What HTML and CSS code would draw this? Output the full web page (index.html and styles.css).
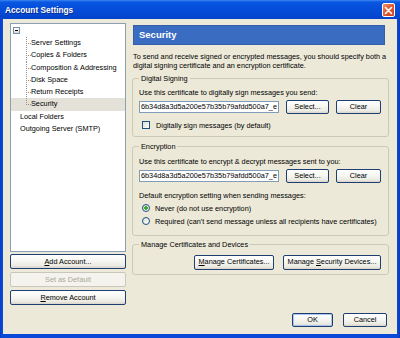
FILE: index.html
```html
<!DOCTYPE html>
<html>
<head>
<meta charset="utf-8">
<link rel="stylesheet" href="styles.css">
</head>
<body>
<div class="window">
  <div class="titlebar">
    <span class="title">Account Settings</span>
    <span class="close"><svg width="9" height="9" viewBox="0 0 9 9"><path d="M1.5 1.5 L7.5 7.5 M7.5 1.5 L1.5 7.5" stroke="#fff" stroke-width="1.6" stroke-linecap="round"/></svg></span>
  </div>
  <div class="client">
    <div class="left">
      <div class="tree">
        <div class="root"><span class="expander"></span></div>
        <div class="node child">Server Settings</div>
        <div class="node child">Copies &amp; Folders</div>
        <div class="node child">Composition &amp; Addressing</div>
        <div class="node child">Disk Space</div>
        <div class="node child">Return Receipts</div>
        <div class="node child last selected">Security</div>
        <div class="node top">Local Folders</div>
        <div class="node top">Outgoing Server (SMTP)</div>
      </div>
      <div class="acct-btns">
        <button class="btn wide"><u>A</u>dd Account...</button>
        <button class="btn wide disabled">Set as Default</button>
        <button class="btn wide"><u>R</u>emove Account</button>
      </div>
    </div>
    <div class="right">
      <div class="header">Security</div>
      <p class="desc">To send and receive signed or encrypted messages, you should specify both a digital signing certificate and an encryption certificate.</p>
      <fieldset class="group g1">
        <legend>Digital Signing</legend>
        <p class="line first">Use this certificate to digitally sign messages you send:</p>
        <div class="cert-row">
          <div class="cert">6b34d8a3d5a200e57b35b79afdd500a7_e</div>
          <button class="btn sel">Select...</button>
          <button class="btn clr">Clear</button>
        </div>
        <div class="check-row"><span class="checkbox"></span>Digitally sign messages (by default)</div>
      </fieldset>
      <fieldset class="group g2">
        <legend>Encryption</legend>
        <p class="line first">Use this certificate to encrypt &amp; decrypt messages sent to you:</p>
        <div class="cert-row">
          <div class="cert">6b34d8a3d5a200e57b35b79afdd500a7_e</div>
          <button class="btn sel">Select...</button>
          <button class="btn clr">Clear</button>
        </div>
        <p class="line default">Default encryption setting when sending messages:</p>
        <div class="radio-row"><span class="radio on"></span>Never (do not use encryption)</div>
        <div class="radio-row"><span class="radio"></span>Required (can't send message unless all recipients have certificates)</div>
      </fieldset>
      <fieldset class="group g3">
        <legend>Manage Certificates and Devices</legend>
        <div class="manage-row">
          <button class="btn mc"><u>M</u>anage Certificates...</button>
          <button class="btn msd">Manage <u>S</u>ecurity Devices...</button>
        </div>
      </fieldset>
      <div class="dlg-btns">
        <button class="btn ok">OK</button>
        <button class="btn cancel">Cancel</button>
      </div>
    </div>
  </div>
</div>
</body>
</html>
```

FILE: styles.css
```css
* { box-sizing: border-box; }
html, body { margin: 0; padding: 0; }
body {
  width: 400px;
  height: 338px;
  overflow: hidden;
  font-family: "Liberation Sans", Arial, sans-serif;
  font-size: 7.3px;
  line-height: 9px;
  color: #000;
  background: #0a3fc8;
}
.window {
  width: 400px;
  height: 338px;
  display: flex;
  flex-direction: column;
  background: linear-gradient(to right, #0a3dc4 0, #0b4ad8 2px, #0b4ad8 397px, #0a3ab8 400px);
  padding: 0 3px 4px 3px;
}
.titlebar {
  height: 19px;
  margin: 0 -3px;
  padding: 0 5px 0 5px;
  display: flex;
  align-items: center;
  justify-content: space-between;
  background: linear-gradient(#3a84ee 0, #0a58e2 2px, #0650dc 6px, #054bd6 12px, #0443cc 19px);
}
.title {
  color: #fff;
  font-weight: bold;
  font-size: 8.3px;
  text-shadow: 1px 1px 0 #0b2a8a;
  margin-top: 2px;
}
.close {
  width: 13px;
  height: 14px;
  border: 1px solid #fff;
  border-radius: 2px;
  background: linear-gradient(135deg, #f0906e 0, #e25c36 45%, #c8401c 100%);
  display: flex;
  align-items: center;
  justify-content: center;
  margin-top: 1px;
}
.client {
  flex: 1;
  background: #ece9d8;
  display: flex;
  gap: 6px;
  padding: 4px 8px 0 7px;
}
.left {
  width: 116px;
  display: flex;
  flex-direction: column;
}
.tree {
  height: 229px;
  background: #fff;
  border: 1px solid #8c9fb6;
  padding-top: 1px;
}
.root {
  height: 12px;
  padding: 2px 0 0 2px;
}
.expander {
  display: block;
  width: 7px;
  height: 7px;
  border: 1px solid #7a93ad;
  background: linear-gradient(#000, #000) center / 3px 1px no-repeat, linear-gradient(#fff, #dcd8cc);
}
.node {
  height: 12.3px;
  line-height: 12.3px;
  white-space: nowrap;
}
.node.top { padding-left: 9px; }
.node.child {
  padding-left: 20px;
  background:
    repeating-linear-gradient(to right, #909090 0 1px, transparent 1px 2px) 15px 6px / 5px 1px no-repeat,
    repeating-linear-gradient(to bottom, #909090 0 1px, transparent 1px 2px) 15px 0 / 1px 100% no-repeat;
}
.node.child.last {
  background:
    repeating-linear-gradient(to right, #909090 0 1px, transparent 1px 2px) 15px 6px / 5px 1px no-repeat,
    repeating-linear-gradient(to bottom, #909090 0 1px, transparent 1px 2px) 15px 0 / 1px 6px no-repeat,
    #e4e2d8;
}
.acct-btns {
  display: flex;
  flex-direction: column;
  gap: 3px;
  margin-top: 2px;
}
.btn {
  font-family: inherit;
  font-size: 7.3px;
  line-height: 1;
  color: #000;
  height: 14px;
  padding: 0;
  border: 1px solid #1d3f74;
  border-radius: 2px;
  background: linear-gradient(#ffffff 0, #f6f6f2 45%, #ecebe4 80%, #d8d4c8 100%);
  text-align: center;
  white-space: nowrap;
}
.btn u { text-decoration: underline; }
.btn.wide { width: 116px; height: 15px; }
.btn.disabled {
  color: #aca899;
  border-color: #c9c7ba;
  background: #f4f3ee;
}
.right {
  width: 257px;
  display: flex;
  flex-direction: column;
}
.header {
  margin: 2px 4px 0 1px;
  height: 20px;
  background: #3a6cc2;
  border: 1px solid #345fa8;
  color: #fff;
  font-weight: bold;
  font-size: 9.5px;
  line-height: 18px;
  padding-left: 5px;
}
.desc {
  margin: 6.5px 0 0 0;
  padding-left: 1px;
}
.group {
  margin: 0;
  border: 1px solid #cbcab8;
  border-radius: 3px;
  padding: 0 6px;
  min-width: 0;
}
.group legend {
  padding: 0 2px;
  margin-left: 0;
  line-height: 9px;
  height: 9px;
}
.g1 { margin-top: 4px; padding-bottom: 6px; }
.g2 { margin-top: 5px; padding-bottom: 9px; }
.g3 { margin-top: 4.5px; padding-bottom: 4px; }
.line { margin: 0; white-space: nowrap; }
.g1 .line.first { margin-top: 5.5px; }
.g2 .line.first { margin-top: 6.5px; }
.cert-row {
  display: flex;
  align-items: center;
  margin-top: 2.5px;
}
.cert {
  width: 140px;
  height: 12px;
  border: 1px solid #7f9db9;
  background: #fff;
  overflow: hidden;
  white-space: nowrap;
  line-height: 10px;
  padding-left: 1px;
}
.btn.sel { width: 43px; margin-left: 7px; }
.btn.clr { width: 45px; margin-left: 7px; }
.check-row, .radio-row {
  display: flex;
  align-items: center;
  height: 9px;
  white-space: nowrap;
}
.check-row { margin-top: 7px; padding-left: 3px; }
.checkbox {
  width: 8px;
  height: 8px;
  border: 1px solid #1c5180;
  background: linear-gradient(135deg, #dcdcd6, #fff);
  margin-right: 6px;
}
.line.default { margin-top: 8px; }
.radio-row { margin-top: 4px; padding-left: 3px; }
.radio {
  width: 8px;
  height: 8px;
  border: 1px solid #1c5180;
  border-radius: 50%;
  background: linear-gradient(135deg, #dcdcd6, #fff);
  margin-right: 5px;
}
.radio.on {
  background: radial-gradient(circle, #3fb93f 0, #21a121 1.5px, transparent 2px), linear-gradient(135deg, #dcdcd6, #fff);
}
.manage-row {
  display: flex;
  justify-content: flex-end;
  gap: 9px;
  margin-top: 5.5px;
  padding-right: 1px;
}
.btn.mc { width: 80px; height: 15px; }
.btn.msd { width: 98px; height: 15px; }
.dlg-btns {
  margin-top: auto;
  margin-bottom: 7px;
  display: flex;
  justify-content: flex-end;
  gap: 10px;
  padding-right: 2px;
}
.btn.ok { width: 41px; box-shadow: inset 0 0 0 1px #a8c4ee; }
.btn.cancel { width: 44px; }
```
